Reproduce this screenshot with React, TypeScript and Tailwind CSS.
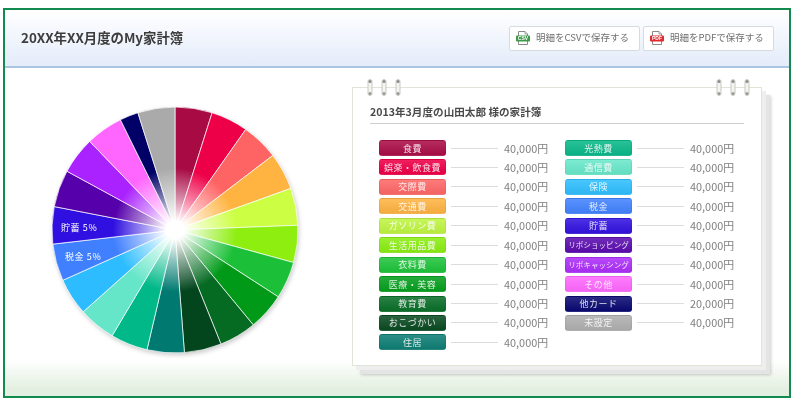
const jp = "font-['Noto_Sans_CJK_JP','Noto_Sans',sans-serif]";

type Item = { label: string; value: number; hex: string; pill: string; long?: boolean };

const left: Item[] = [
  { label: "食費", value: 40000, hex: "#a80a44", pill: "bg-[#ab0f48]" },
  { label: "娯楽・飲食費", value: 40000, hex: "#ee0048", pill: "bg-[#ee0048]" },
  { label: "交際費", value: 40000, hex: "#ff6464", pill: "bg-[#ff6868]" },
  { label: "交通費", value: 40000, hex: "#ffb340", pill: "bg-[#ffb444]" },
  { label: "ガソリン費", value: 40000, hex: "#ccff44", pill: "bg-[#c0f544]" },
  { label: "生活用品費", value: 40000, hex: "#8eee10", pill: "bg-[#8cee14]" },
  { label: "衣料費", value: 40000, hex: "#1cc038", pill: "bg-[#20c43c]" },
  { label: "医療・美容", value: 40000, hex: "#009a18", pill: "bg-[#08a020]" },
  { label: "教育費", value: 40000, hex: "#056a22", pill: "bg-[#0c702a]" },
  { label: "おこづかい", value: 40000, hex: "#03461e", pill: "bg-[#0c4c24]" },
  { label: "住居", value: 40000, hex: "#007a70", pill: "bg-[#107f76]" },
];

const right: Item[] = [
  { label: "光熱費", value: 40000, hex: "#00b888", pill: "bg-[#0cb98a]" },
  { label: "通信費", value: 40000, hex: "#66e6c8", pill: "bg-[#6ae8ca]" },
  { label: "保険", value: 40000, hex: "#2cbcff", pill: "bg-[#30bfff]" },
  { label: "税金", value: 40000, hex: "#4080ff", pill: "bg-[#4484ff]" },
  { label: "貯蓄", value: 40000, hex: "#3010e0", pill: "bg-[#3414e0]" },
  { label: "リボショッピング", value: 40000, hex: "#5500aa", pill: "bg-[#5c0eb0]", long: true },
  { label: "リボキャッシング", value: 40000, hex: "#aa22ff", pill: "bg-[#ae30fa]", long: true },
  { label: "その他", value: 40000, hex: "#ff66ff", pill: "bg-[#ff6aff]" },
  { label: "他カード", value: 20000, hex: "#000066", pill: "bg-[#0c0c74]" },
  { label: "未設定", value: 40000, hex: "#aaaaaa", pill: "bg-[#b0b0b0]" },
];

function Pie() {
  const all = [...left, ...right];
  const total = all.reduce((s, i) => s + i.value, 0);
  const c = 128;
  const r = 123;
  let acc = 0;
  const slices = all.map((it) => {
    const a0 = (acc / total) * Math.PI * 2;
    acc += it.value;
    const a1 = (acc / total) * Math.PI * 2;
    const p = (a: number) => `${(c + r * Math.sin(a)).toFixed(2)} ${(c - r * Math.cos(a)).toFixed(2)}`;
    return <path key={it.label} d={`M${c} ${c}L${p(a0)}A${r} ${r} 0 0 1 ${p(a1)}Z`} fill={it.hex} stroke="#ffffff" strokeOpacity="0.7" strokeWidth="1" />;
  });
  return (
    <svg width="256" height="256" viewBox="0 0 256 256" className="shrink-0 drop-shadow-[1px_2px_2px_rgba(0,0,0,0.2)]">
      <defs>
        <radialGradient id="glow" gradientUnits="userSpaceOnUse" cx="128" cy="128" r="62">
          <stop offset="0" stopColor="#fff" stopOpacity="1" />
          <stop offset="0.14" stopColor="#fff" stopOpacity="1" />
          <stop offset="0.5" stopColor="#fff" stopOpacity="0.55" />
          <stop offset="1" stopColor="#fff" stopOpacity="0" />
        </radialGradient>
      </defs>
      {slices}
      <circle cx="128" cy="128" r="62" fill="url(#glow)" />
      <text x="14" y="129" fill="#fff" fontSize="9" fontFamily="'Noto Sans CJK JP', sans-serif" letterSpacing="0.6">貯蓄 5%</text>
      <text x="18" y="158" fill="#fff" fontSize="9" fontFamily="'Noto Sans CJK JP', sans-serif" letterSpacing="0.6">税金 5%</text>
    </svg>
  );
}

function Row({ item }: { item: Item }) {
  return (
    <div className="flex h-[16px] items-center">
      <div className={`${item.pill} flex h-[16px] w-[67px] items-center justify-center overflow-hidden whitespace-nowrap rounded-[3px] border border-black/5 bg-linear-to-b from-white/12 to-black/4 leading-none text-white/85 ${item.long ? "text-[7.6px]" : "text-[9px] tracking-[0.5px]"}`}>
        {item.label}
      </div>
      <div className="ml-[5px] h-px w-[47px] bg-[#dddddd]" />
      <div className="ml-[6px] text-[10.9px] leading-none text-[#808080]">
        {item.value.toLocaleString("en-US")}円
      </div>
    </div>
  );
}

function Ring() {
  return (
    <svg width="6" height="17" viewBox="0 0 6 17">
      <rect x="1" y="0.5" width="4" height="16" rx="2" fill="#f4f4f0" stroke="#c8c8c0" strokeWidth="1" />
      <rect x="1.5" y="1" width="3" height="3" rx="1.5" fill="#8a8a8a" />
      <rect x="1.5" y="13" width="3" height="3" rx="1.5" fill="#9a9a9a" />
    </svg>
  );
}

function FileIcon({ color, label }: { color: string; label: string }) {
  return (
    <svg width="14" height="14" viewBox="0 0 14 14" className="shrink-0">
      <path d="M2.5 0.5h6.5l2.5 2.5v10.5h-9z" fill="#fff" stroke="#8a8a8a" strokeWidth="1" />
      <path d="M9 0.5v2.5h2.5" fill="#e8e8e8" stroke="#8a8a8a" strokeWidth="0.8" />
      <rect x="0" y="4.5" width="14" height="6" rx="1" fill={color} />
      <text x="7" y="9.4" textAnchor="middle" fontSize="5" fontWeight="700" fill="#fff" fontFamily="'Liberation Sans', sans-serif">{label}</text>
    </svg>
  );
}

function SaveButton({ color, label, text }: { color: string; label: string; text: string }) {
  return (
    <button className={`flex h-[25px] w-[131px] items-center gap-[6px] rounded-[2px] border border-[#d6dbe2] bg-white pl-[6px] text-[9.5px] leading-none text-[#707070] ${jp}`}>
      <FileIcon color={color} label={label} />
      <span className="whitespace-nowrap">{text}</span>
    </button>
  );
}

export default function App() {
  return (
    <div className={`h-[408px] w-[800px] overflow-hidden bg-white pl-[3px] pt-[8px] blur-[0.35px] ${jp}`}>
      <div className="flex h-[390px] w-[788px] flex-col border-2 border-[#128a50]">
        <header className="flex h-[58px] shrink-0 items-center justify-between border-b-2 border-[#aac4e2] bg-linear-to-b from-white to-[#e3ecfa] pl-[16px] pr-[15px]">
          <h1 className="text-[13.4px] font-bold leading-none text-[#3c3c3c]">20XX年XX月度のMy家計簿</h1>
          <div className="flex gap-[3px]">
            <SaveButton color="#3e9a48" label="CSV" text="明細をCSVで保存する" />
            <SaveButton color="#e02a30" label="PDF" text="明細をPDFで保存する" />
          </div>
        </header>
        <main className="flex flex-1 items-start bg-linear-to-b from-white from-[89%] to-[#e3efe0] to-[98%] pl-[42px]">
          <div className="mt-[34px]">
            <Pie />
          </div>
          <section className="relative ml-[49px] mt-[19px] h-[279px] w-[410px]">
            <div className="absolute inset-0 translate-x-[8px] translate-y-[8px] bg-[#e4e4e4] shadow-[1px_1px_3px_rgba(0,0,0,0.2)]" />
            <div className="absolute inset-0 translate-x-[4px] translate-y-[4px] bg-[#eeeeee]" />
            <div className="absolute inset-0 border border-[#dfe6d8] bg-white" />
            <div className="absolute -top-[8px] left-[15px] flex gap-[8px]"><Ring /><Ring /><Ring /></div>
            <div className="absolute -top-[8px] left-[364px] flex gap-[8px]"><Ring /><Ring /><Ring /></div>
            <div className="relative px-[18px] pt-[20px]">
              <h2 className="h-[17px] border-b border-[#cfcfcf] text-[10.6px] font-bold leading-none text-[#4a4a4a]">2013年3月度の山田太郎 様の家計簿</h2>
              <div className="mt-[16px] flex pl-[9px]">
                <div className="flex w-[186px] shrink-0 flex-col gap-[3.45px]">
                  {left.map((i) => <Row key={i.label} item={i} />)}
                </div>
                <div className="flex w-[186px] shrink-0 flex-col gap-[3.45px]">
                  {right.map((i) => <Row key={i.label} item={i} />)}
                </div>
              </div>
            </div>
          </section>
        </main>
      </div>
    </div>
  );
}
